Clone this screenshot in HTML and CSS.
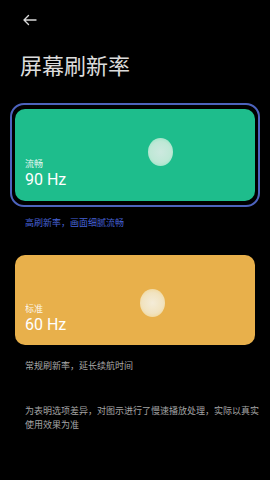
FILE: index.html
```html
<!DOCTYPE html>
<html lang="zh-CN">
<head>
  <meta charset="UTF-8">
  <meta name="viewport" content="width=device-width, initial-scale=1.0">
  <title>屏幕刷新率</title>
  <link rel="stylesheet" href="styles.css">
</head>
<body>
  <div class="top">
    <svg class="back" width="15" height="12" viewBox="0 0 15 12">
      <path d="M14 6H2M6.5 1.5L2 6l4.5 4.5" fill="none" stroke="#d8d8d8" stroke-width="1.4" stroke-linecap="round" stroke-linejoin="round"/>
    </svg>
  </div>
  <h1 class="title">屏幕刷新率</h1>

  <div class="option selected">
    <div class="card card-green">
      <span class="dot dot-green"></span>
      <div class="card-label">流畅</div>
      <div class="card-value">90 Hz</div>
    </div>
  </div>
  <p class="caption caption-active">高刷新率，画面细腻流畅</p>

  <div class="option">
    <div class="card card-yellow">
      <span class="dot dot-yellow"></span>
      <div class="card-label">标准</div>
      <div class="card-value">60 Hz</div>
    </div>
  </div>
  <p class="caption caption-plain">常规刷新率，延长续航时间</p>

  <p class="note">为表明选项差异，对图示进行了慢速播放处理，实际以真实使用效果为准</p>
</body>
</html>
```

FILE: styles.css
```css
body {
  margin: 0;
  background: #000;
  font-family: "Noto Sans CJK SC", "Noto Sans", sans-serif;
  color: #d8d8d8;
}

.top {
  height: 40px;
  padding-left: 22px;
  display: flex;
  align-items: center;
}

.title {
  margin: 9px 0 0 20px;
  font-size: 22px;
  line-height: 30px;
  font-weight: 400;
  color: #dcdcdc;
}

.option {
  margin: 0 15px;
}

.option.selected {
  margin: 24px 10px 0;
  padding: 4px 3px;
  border: 2px solid #4d63bd;
  border-radius: 14px;
}

.card {
  position: relative;
  height: 92px;
  padding: 0 10px 11px;
  box-sizing: border-box;
  border-radius: 10px;
  display: flex;
  flex-direction: column;
  justify-content: flex-end;
  color: #fff;
}

.card-green {
  background: #1ebd8c;
}

.card-yellow {
  height: 90px;
  padding-bottom: 10px;
  background: #e8b04b;
  margin-top: 25px;
}

.card-label {
  font-size: 9px;
  line-height: 13px;
  opacity: 0.9;
}

.card-value {
  font-family: Roboto, "Noto Sans", sans-serif;
  font-size: 16px;
  line-height: 20px;
}

.dot {
  position: absolute;
  width: 25px;
  height: 28px;
  border-radius: 50%;
}

.dot-green {
  left: 133px;
  top: 29px;
  background: radial-gradient(circle at 50% 50%, #cde9df 0%, #bfe8d6 55%, #86e2bd 100%);
}

.dot-yellow {
  left: 125px;
  top: 34px;
  background: radial-gradient(circle at 50% 50%, #f4ecd8 0%, #f1e3c0 55%, #f0cf80 100%);
}

.caption {
  margin: 9px 0 0 25px;
  font-size: 9px;
  line-height: 14px;
}

.caption-active {
  color: #4662d6;
}

.caption-plain {
  margin-top: 14px;
  color: #a8a8a8;
}

.note {
  margin: 31px 5px 0 25px;
  font-size: 9px;
  line-height: 14px;
  color: #a4a4a4;
}
```
